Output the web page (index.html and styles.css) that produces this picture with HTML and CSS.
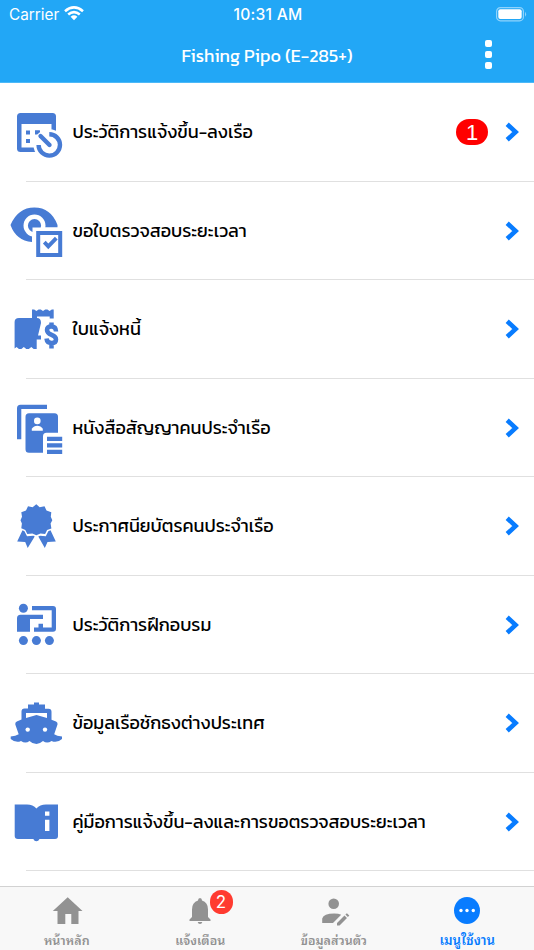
FILE: index.html
```html
<!DOCTYPE html>
<html lang="th">
<head>
<meta charset="utf-8">
<title>Fishing Pipo</title>
<link rel="stylesheet" href="styles.css">
</head>
<body>
<div class="app">
<header class="header">
  <div class="status">
    <div class="carrier"><span>Carrier</span><svg width="20" height="15" viewBox="0 0 20 15"><g fill="none" stroke="#fff" stroke-width="2.6"><path d="M1 5.2Q10-2.4 19 5.2"/><path d="M4.2 8.5Q10 3.6 15.8 8.5"/></g><path fill="#fff" d="M6.6 10.7Q10 8 13.4 10.7L10 14.2Z"/></svg></div>
    <span class="clock">10:31 AM</span>
    <svg class="battery" width="31" height="15" viewBox="0 0 31 15"><rect x=".6" y=".6" width="26.8" height="13.2" rx="3.8" fill="none" stroke="#8fd3fc" stroke-width="1.2"/><rect x="2.3" y="2.3" width="23.4" height="9.8" rx="2" fill="#fff"/><path d="M29 4.7q2.2 2.5 0 5z" fill="#8fd3fc"/></svg>
  </div>
  <div class="title-bar"><h1>Fishing Pipo (E-285+)</h1><span class="dots"><i></i><i></i><i></i></span></div>
</header>
<main class="list">
  <div class="row"><svg class="icon" viewBox="0 83 72 98"><rect x="17" y="113" width="39" height="39" rx="3.5"/><path fill="#fff" d="M21.5 124h30v23.5h-30z"/><path d="M26 130.5h4v4h-4zM26 139h4v4h-4zM35 130.5h5v4h-5z"/><circle cx="49.3" cy="145" r="15.8" fill="#fff"/><path d="M35 130.5h5l-5 3.5z"/><path d="M49.3 134.2A10.7 10.7 0 1 1 38.6 145" fill="none" stroke="#477bd4" stroke-width="4.4"/><path d="M39 133.5l11 11" stroke="#fff" stroke-width="8.5"/><path d="M40.5 136l9 9" stroke="#477bd4" stroke-width="4.4" stroke-linecap="round"/></svg><span class="label">ประวัติการแจ้งขึ้น-ลงเรือ</span><span class="badge">1</span><svg class="chevron" viewBox="0 0 14 20"><path d="M2.2 2.2L10.6 10 2.2 17.8"/></svg></div>
  <div class="row"><svg class="icon" viewBox="0 181.4 72 98"><path d="M10.5 224.5Q18 207 34.3 207 51 207 57.5 224.5V227H32V241.5Q16 240 10.5 224.5z"/><circle cx="34.5" cy="225" r="8.8" fill="#477bd4" stroke="#fff" stroke-width="4.4"/><path fill="#fff" d="M32.5 227H64v32H32.5z"/><path fill="none" stroke="#477bd4" stroke-width="4" d="M38.2 232.5h22v22h-22z"/><path fill="none" stroke="#477bd4" stroke-width="3.8" d="M44.3 241.5l4 4.3 8-8.3"/></svg><span class="label">ขอใบตรวจสอบระยะเวลา</span><svg class="chevron" viewBox="0 0 14 20"><path d="M2.2 2.2L10.6 10 2.2 17.8"/></svg></div>
  <div class="row"><svg class="icon" viewBox="0 279.9 72 98"><path d="M19 318H32V309.5l2.2 0 2.2 1.5 2.2-1.5 2.2 0 2.2 1.5 2.2-1.5 2.2 0 2.2 1.5 2.2-1.5h1.9v9h-4v-2H37v1.5q4 0 4 5L38 335.5h3v4h-4.3V349h-3l-2.4-2-2.5 2h-2.5l-2.5-2-2.4 2h-2.5l-2.3-2-2 1.5V322q0-4 4.4-4z"/><path fill="none" stroke="#477bd4" stroke-width="4.5" d="M56 331.5c0-3.8-1.8-5.2-4.6-5.2-3 0-4.4 1.6-4.4 3.5 0 6 9 4 9 9.5 0 2.3-1.6 3.7-4.6 3.7-3 0-4.6-1.6-4.9-4.5M51.5 322.5v4M51.5 343v5.5"/></svg><span class="label">ใบแจ้งหนี้</span><svg class="chevron" viewBox="0 0 14 20"><path d="M2.2 2.2L10.6 10 2.2 17.8"/></svg></div>
  <div class="row"><svg class="icon" viewBox="0 378.3 72 98"><path d="M20.5 404H47v4.3H21.3V438.5H17V407.5q0-3.5 3.5-3.5z"/><path d="M29 412.5H54.5q3.5 0 3.5 3.5v16H46.5q-3.5 0-3.5 3.5V452H29q-3.5 0-3.5-3.5V416q0-3.5 3.5-3.5zM47 436h15.2v4.3H47zM47 442.5h15.2v4.3H47zM47 449h15.2v4.3H47z"/><g fill="#fff"><circle cx="37.3" cy="420.2" r="3.3"/><path d="M31.8 430v-2q2-3 5.5-3t5.5 3v2z"/></g></svg><span class="label">หนังสือสัญญาคนประจำเรือ</span><svg class="chevron" viewBox="0 0 14 20"><path d="M2.2 2.2L10.6 10 2.2 17.8"/></svg></div>
  <div class="row"><svg class="icon" viewBox="0 476.8 72 98"><path d="M36.3 504l3.4 3 4.8-.9 2 4.2 4.8 1.8-.5 4.4 1.5 3.5-1.7 3.4.8 4.8-4.3 1.5-2 4-4.6-.4-4.2 1.7-4-1.7-5 .4-2-4-4-1.7.6-4.6-1.4-3.4 1.5-3.4-.7-4.5 4.7-1.8 2-4.2 4.6.9zM22.5 530l2 1 2.5 5 6.5-.5 1.2.8-7 11.5-2.5-6-8-.5zM50.5 530l5.3 11.3-8.3.5-2.7 6-6.5-11.5 1.8-.8 5.7.5 2.5-5z"/></svg><span class="label">ประกาศนียบัตรคนประจำเรือ</span><svg class="chevron" viewBox="0 0 14 20"><path d="M2.2 2.2L10.6 10 2.2 17.8"/></svg></div>
  <div class="row"><svg class="icon" viewBox="0 575.2 72 98"><circle cx="23.4" cy="607.5" r="4.5"/><circle cx="23.4" cy="639.8" r="4.5"/><circle cx="36.4" cy="639.8" r="4.5"/><circle cx="49.4" cy="639.8" r="4.5"/><path d="M20.5 614H43v4.3H30V631H17V617.5q0-3.5 3.5-3.5zM32 605.3H53q3 0 3 3V628q0 3-3 3H34v-4.3h4.5V623H43v3.7h8.7V609.5H32z"/></svg><span class="label">ประวัติการฝึกอบรม</span><svg class="chevron" viewBox="0 0 14 20"><path d="M2.2 2.2L10.6 10 2.2 17.8"/></svg></div>
  <div class="row"><svg class="icon" viewBox="0 673.6 72 98"><path fill-rule="evenodd" d="M34 702h5v2h6v4.3h3.5q3 0 3 3v8l4.5 1.8q2 1 1.5 3l-3.3 9.7q2.5 2 7.8 2.2v2.5q-5 4.5-10.5 2-4.5 3-8.5 0-3.5 3-6.5 3-4 0-7-3-4 3-8.5 0-5 2.5-10.3-2v-2.5q5-.2 8-2.2L15.3 724q-.5-2 1.5-3l4.7-1.8v-8q0-3 3-3H28V704h6zM26 712.5v5l10.5-2.8 10.5 2.8v-5z"/><g fill="#fff"><circle cx="27.7" cy="729.2" r="2.2"/><circle cx="45" cy="729.2" r="2.2"/></g></svg><span class="label">ข้อมูลเรือชักธงต่างประเทศ</span><svg class="chevron" viewBox="0 0 14 20"><path d="M2.2 2.2L10.6 10 2.2 17.8"/></svg></div>
  <div class="row"><svg class="icon" viewBox="0 772.6 72 98"><path d="M14.7 804.2H27q6 0 9.4 4 3.5-4 9.5-4H58V835.5q0 3-3 3H39.5q-1 2.3-3.1 2.3t-3.1-2.3H18q-3.3 0-3.3-3z"/><path fill="#fff" d="M45 811h4.4v4.3H45zM45 819.3h4.4v11.4H45z"/></svg><span class="label">คู่มือการแจ้งขึ้น-ลงและการขอตรวจสอบระยะเวลา</span><svg class="chevron" viewBox="0 0 14 20"><path d="M2.2 2.2L10.6 10 2.2 17.8"/></svg></div>
</main>
<nav class="tabs">
  <a class="tab"><svg viewBox="0 0 36 36"><path d="M18.7 3.2L33.5 17h-4v13h-7.2V20h-6v10H8.5V17h-4.7z"/></svg><span>หน้าหลัก</span></a>
  <a class="tab"><svg viewBox="0 0 36 36"><path d="M18 4q2 0 2 2.5 6 1.8 6 9V23l2.5 2.5V27h-21v-1.5L10 23v-7.5q0-7.2 6-9Q16 4 18 4zM15.7 28h4.6q-.4 2-2.3 2t-2.3-2z"/></svg><span class="count">2</span><span>แจ้งเตือน</span></a>
  <a class="tab"><svg viewBox="0 0 36 36"><circle cx="17.7" cy="9.7" r="5.3"/><path d="M6.2 29v-4.5q1.5-5 12-5 4.5 0 7 1.3l-8.2 8.2zM21 29l7.5-7.5 2.5 2.5L23.5 31.5H21zM29.4 20.5l1.5-1.3 2.4 2.3-1.4 1.5z"/></svg><span>ข้อมูลส่วนตัว</span></a>
  <a class="tab active"><svg viewBox="0 0 36 36"><ellipse cx="18" cy="16.5" rx="13" ry="13.6"/><g fill="#fff"><circle cx="12" cy="16.5" r="1.7"/><circle cx="18" cy="16.5" r="1.7"/><circle cx="24.3" cy="16.5" r="1.7"/></g></svg><span>เมนูใช้งาน</span></a>
</nav>
</div>
</body>
</html>
```
FILE: styles.css
```css
* { box-sizing: border-box; }
body { margin: 0; background: #fff; font-family: "Kanit", "Noto Sans Thai", "Open Sans", sans-serif; color: #000; }
.app { width: 534px; height: 950px; display: flex; flex-direction: column; overflow: hidden; }
.header { height: 83px; flex: none; background: #22a7f6; color: #fff; border-bottom: 1px solid #4cb9f8; }
.status { height: 28px; display: grid; grid-template-columns: 1fr auto 1fr; align-items: center; padding: 0 7px 0 9px; font: 15.3px/28px Inter, sans-serif; }
.carrier { display: flex; align-items: center; gap: 5px; }
.carrier svg { margin-bottom: 2px; }
.clock { font-weight: 500; font-size: 15.6px; letter-spacing: .25px; padding-top: 1px; }
.carrier span { padding-top: 1px; }
.battery { justify-self: end; margin-bottom: 1px; }
.title-bar { height: 55px; display: grid; grid-template-columns: 1fr auto 1fr; align-items: center; }
h1 { grid-column: 2; margin: 1px 0 0; font-size: 18px; line-height: 28px; font-weight: 400; white-space: nowrap; }
.dots { display: flex; flex-direction: column; gap: 4px; justify-self: end; margin-right: 42px; margin-top: -2px; }
.dots i { width: 7px; height: 7.2px; background: #fff; border-radius: 2px; }
.list { flex: none; height: 803px; }
.row { position: relative; display: flex; align-items: center; height: 98.5px; padding-right: 15px; background: linear-gradient(#e0e0e0, #e0e0e0) 26px 100% / 508px 1px no-repeat; }
.icon { width: 72px; height: 98px; flex: none; fill: #477bd4; }
.label { flex: 1; padding-left: .5px; font-size: 18px; line-height: 30px; font-weight: 400; white-space: nowrap; }
.badge { width: 32px; height: 26px; border-radius: 13px; background: #f00; color: #fff; font: 22px/27px "Liberation Sans", sans-serif; text-align: center; margin-right: 17px; }
.chevron { width: 14px; height: 20px; fill: none; stroke: #087cff; stroke-width: 4.6; flex: none; }
.tabs { height: 64px; flex: none; display: flex; background: #f8f8f8; border-top: 1px solid #d2d2d2; position: relative; }
.tab { flex: 1; position: relative; display: flex; flex-direction: column; align-items: center; padding-top: 7px; color: #929292; fill: currentColor; font: 600 12.5px/20px Thonburi, "Noto Sans Thai Looped", Sarabun, Loma, Garuda, Waree, "Noto Sans Thai", sans-serif; white-space: nowrap; }
.tab svg { width: 36px; height: 36px; flex: none; }
.tab > span:last-child { margin-top: -1px; }
.active { color: #087cff; font-size: 13.2px; }
.count { position: absolute; left: 76px; top: 3px; width: 23px; height: 24px; border-radius: 12px; background: #ff3b30; color: #fff; font: 17px/24px Inter, sans-serif; text-align: center; }
```
